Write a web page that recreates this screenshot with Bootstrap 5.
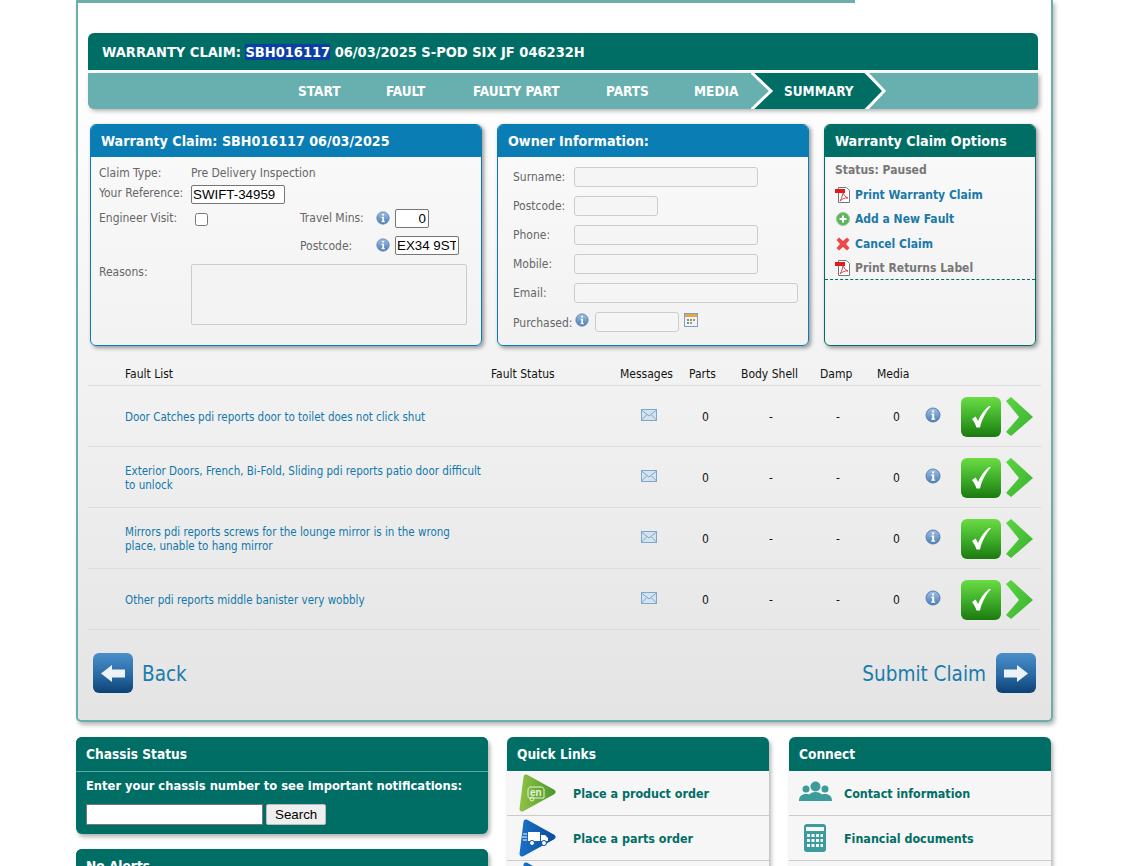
<!DOCTYPE html>
<html lang="en">
<head>
    <meta charset="UTF-8">
    <meta name="viewport" content="width=device-width, initial-scale=1.0">
    <title>Warranty Claim</title>
    <link href="https://cdn.jsdelivr.net/npm/bootstrap@5.3.0/dist/css/bootstrap.min.css" rel="stylesheet">
    <style>
        html, body { height: 866px; overflow: hidden; background: #fff; }
        body { font-family: "DejaVu Sans Condensed", "Noto Sans", sans-serif; font-size: 12px; color: #222; }
        a { text-decoration: none; }
        .page-wrap { width: 977px; margin-left: 76px; }

        .claim-panel {
            height: 722px;
            border: 2px solid #6aafad;
            border-top: 0;
            border-radius: 0 0 5px 5px;
            background: linear-gradient(#fff 0, #fff 60px, #e4e4e4 100%);
            box-shadow: 2px 3px 4px rgba(0,0,0,.28);
            padding: 0 10px;
        }
        .top-strip { height: 3px; width: 777px; margin-left: -10px; background: #6aafad; }
        .claim-title {
            margin: 30px 3px 3px 0; height: 37px; padding-left: 14px;
            background: #006e65; color: #fff; border-radius: 6px 6px 0 0;
            font-size: 14.5px; font-weight: 700; line-height: 38px;
        }
        .claim-title span { background: #0b3fa6; }
        .step-bar {
            position: relative; height: 36px; margin-right: 3px; padding-left: 210px;
            background: #68b0af; border-radius: 0 0 6px 6px; color: #fff;
            box-shadow: 2px 2px 4px rgba(0,0,0,.3);
            font-size: 13.5px; font-weight: 700; line-height: 36px;
        }
        .step-on { position: relative; width: 113px; }
        .step-on svg { position: absolute; left: -33px; top: 0; }
        .step-on b { position: relative; }

        .info-cards { margin: 15px 2px 0 2px; gap: 15px; height: 222px; }
        .panel-box {
            border: 1px solid #0a7db4; border-radius: 6px; overflow: hidden;
            background: linear-gradient(#fafafa, #f2f2f2);
            box-shadow: 2px 2px 4px rgba(0,0,0,.4);
            color: #666;
        }
        .panel-box-green { border-color: #006e65; }
        .box-head {
            height: 32px; padding-left: 10px; background: #0a7db4; color: #fff;
            font-size: 14.2px; font-weight: 700; line-height: 33px;
        }
        .panel-box-green .box-head { background: #006e65; }
        .box-claim { width: 392px; }
        .box-owner { width: 312px; }
        .box-options { width: 212px; }

        .claim-form { padding: 7px 8px 0 8px; }
        .claim-form label, .owner-form label { white-space: nowrap; }
        .lbl-a { width: 92px; }
        .lbl-b { width: 76px; }
        .old-input {
            height: 19px; padding: 0 2px 0 1px; border: 1px solid #767676; border-radius: 2px;
            font-family: "Liberation Sans", sans-serif; font-size: 13.33px; color: #000; background: #fff;
        }
        .dim-input { height: 20px; border: 1px solid #ccc; border-radius: 3px; background: #f5f5f5; }
        .old-check { width: 13px; height: 13px; margin: 4px 0 0 4px; }
        .info-mark { margin: 2px 4px 0 0; }
        .reasons-box { display: block; width: 276px; height: 61px; border: 1px solid #ccc; border-radius: 2px; background: #f3f3f3; resize: none; }

        .owner-form { padding: 10px 0 0 15px; }
        .owner-row { height: 29px; }
        .owner-form label { width: 61px; padding-top: 1px; }

        .option-list { padding-top: 1px; font-size: 12px; font-weight: 700; }
        .option-list > div { height: 24.5px; padding-left: 10px; }
        .option-list a { color: #1a79a8; }
        .option-muted { color: #777; }
        .option-end { border-bottom: 1px dashed #006e65; height: 24px !important; }

        .fault-table { width: 953px; margin: 15px 0 0 0; table-layout: fixed; --bs-table-bg: transparent; color: #111; font-size: 12px; }
        .fault-table th { height: 24px; padding: 2px 0 0 0; font-weight: 400; vertical-align: middle; border-bottom: 1px solid #ddd; }
        .fault-table td { height: 61px; padding: 2px 0 0 0; vertical-align: middle; border-bottom: 1px solid #ddd; line-height: 14px; }
        .fault-table td a { display: block; color: #1278ab; width: 357px; font-size: 11.5px; }
        .cell-icon { margin-bottom: 4px; }
        .pad-msg { padding-left: 21px !important; }
        .pad-parts { padding-left: 13px !important; }
        .pad-body { padding-left: 28px !important; }
        .pad-damp { padding-left: 16px !important; }
        .pad-media { padding-left: 16px !important; }
        .row-acts { gap: 5px; }

        .nav-links { margin-top: 23px; padding: 0 5px; font-size: 20.5px; }
        .nav-links a { color: #1a7cab; gap: 9px; }
        .nav-links span { padding-top: 4px; }
        .nav-next { gap: 10px !important; }

        .foot-cards { margin-top: 15px; }
        .foot-left { width: 412px; margin-right: 19px; }
        .foot-mid { width: 262px; margin-right: 20px; }
        .foot-right { width: 262px; }
        .green-box {
            color: #fff; border-radius: 6px; overflow: hidden;
            background: #006e65;
            box-shadow: 2px 3px 4px rgba(0,0,0,.3);
        }
        .green-head { height: 34px; padding-left: 10px; background: #006e65; font-size: 13.6px; font-weight: 700; line-height: 35px; }
        .head-line { height: 35px; border-bottom: 1px solid #5aa8a2; }
        .chassis-body { height: 62px; padding: 4px 10px 0 10px; font-size: 12.8px; font-weight: 700; }
        .chassis-form { margin-top: 9px; }
        .chassis-input { width: 177px; height: 21px; border: 1px solid #767676; background: #fff; }
        .chassis-btn {
            height: 21px; padding: 0 8px; margin-left: 3px; border: 1px solid #bbb; border-radius: 2px;
            background: #efefef; color: #000; font-family: "Liberation Sans", sans-serif; font-size: 13.33px; line-height: 18px;
        }
        .alert-box { margin-top: 15px; }
        .link-box { background: #f6f6f6; height: 200px; }
        .link-row { height: 45px; border-bottom: 1px solid #ccc; color: #006e65; font-size: 12.4px; font-weight: 700; }
        .link-row svg { flex: none; }
        .link-row span { padding-top: 2px; }
        .quick-row { padding-left: 11px; gap: 17px; }
        .conn-row { padding-left: 10px; gap: 12px; }
    </style>
</head>
<body>
    <svg width="0" height="0" class="position-absolute">
        <defs>
            <linearGradient id="gInfo" x1="0" y1="0" x2="0" y2="1"><stop offset="0" stop-color="#a3c0e4"/><stop offset="1" stop-color="#4a7cb6"/></linearGradient>
            <linearGradient id="gOk" x1="0" y1="0" x2="0" y2="1"><stop offset="0" stop-color="#6bdc44"/><stop offset=".5" stop-color="#3fb02a"/><stop offset="1" stop-color="#1b7a0f"/></linearGradient>
            <linearGradient id="gGo" x1="0" y1="0" x2="1" y2="1"><stop offset="0" stop-color="#5cd545"/><stop offset="1" stop-color="#38b02c"/></linearGradient>
            <linearGradient id="gNav" x1="0" y1="0" x2="0" y2="1"><stop offset="0" stop-color="#4a8fc9"/><stop offset=".55" stop-color="#2a6aa6"/><stop offset="1" stop-color="#0c4274"/></linearGradient>
            <linearGradient id="gEn" x1="0" y1="0" x2="1" y2="0"><stop offset="0" stop-color="#8cc044"/><stop offset="1" stop-color="#4f9a2c"/></linearGradient>
            <linearGradient id="gTruck" x1="0" y1="0" x2="1" y2="0"><stop offset="0" stop-color="#1a6fc4"/><stop offset="1" stop-color="#0a4f9c"/></linearGradient>
            <symbol id="iInfo" viewBox="0 0 16 16">
                <circle cx="8" cy="8" r="7" fill="url(#gInfo)" stroke="#5580b0"/>
                <rect x="7" y="3.200" width="2.200" height="2.200" rx="1" fill="#fff"/>
                <path d="M6.200 6.600h3v5h1v1.200H6.200v-1.200h1V7.800h-1z" fill="#fff"/>
            </symbol>
            <symbol id="iMail" viewBox="0 0 16 12">
                <rect x=".5" y=".5" width="15" height="11" fill="#d3e3f0" stroke="#7fa6c8"/>
                <path d="M.5 1 8 7l7.500-6M.5 11 6 5.500M15.500 11 10 5.500" fill="none" stroke="#7fa6c8"/>
            </symbol>
            <symbol id="iOk" viewBox="0 0 40 40">
                <rect width="40" height="40" rx="6" fill="url(#gOk)"/>
                <path d="M11 22l3.500-2.500c1 1.500 2 3 2.500 4.500 2.500-6 6-11 11-15h2c-5 5.500-9 13-11 21.500h-3.500c-1-3-2.500-6-4.500-8.500z" fill="#fff"/>
            </symbol>
            <symbol id="iGo" viewBox="0 0 28 40">
                <path d="M0 4 5 0 27 20 5 39 0 35 13 20z" fill="url(#gGo)"/>
            </symbol>
            <symbol id="iPdf" viewBox="0 0 16 16">
                <path d="M3.500 .5h8l3 3v12h-11z" fill="#fff" stroke="#777"/>
                <rect x="0" y="2" width="10" height="4" fill="#e01b1b"/>
                <path d="M5 14c2-3 3-7 3-10 0 3 2 6 5 7-3-.5-6 1-8 3z" fill="none" stroke="#c33" stroke-width=".9"/>
            </symbol>
            <symbol id="iPlus" viewBox="0 0 16 16">
                <circle cx="8" cy="8" r="6.500" fill="#5cb55c" stroke="#9ac79a"/>
                <path d="M7 4.500h2V7h2.500v2H9v2.500H7V9H4.500V7H7z" fill="#fff"/>
            </symbol>
            <symbol id="iCross" viewBox="0 0 16 16">
                <path d="M1.500 4 4 1.500 8 5l4-3.500L14.500 4 11 8l3.500 4-2.500 2.500-4-3.500-4 3.500L1.500 12 5 8z" fill="#ee4848"/>
            </symbol>
            <symbol id="iCal" viewBox="0 0 14 14">
                <rect x=".5" y=".5" width="13" height="13" fill="#eef3f8" stroke="#7f9fc0"/>
                <rect x="1" y="1" width="12" height="3" fill="#e8a24a"/>
                <path d="M3 6h2v2H3zM6 6h2v2H6z" fill="#6aa84f"/><path d="M9 6h2v2H9zM6 9h2v2H6z" fill="#d98b3a"/><path d="M3 9h2v2H3z" fill="#5a8fc9"/>
            </symbol>
            <symbol id="iBack" viewBox="0 0 40 40">
                <rect width="40" height="40" rx="6" fill="url(#gNav)"/>
                <path d="M8 20.500 19 12v4.500h13v8H19V29z" fill="#eef2f6"/>
            </symbol>
            <symbol id="iNext" viewBox="0 0 40 40">
                <rect width="40" height="40" rx="6" fill="url(#gNav)"/>
                <path d="M32 20.500 21 12v4.500H8v8h13V29z" fill="#eef2f6"/>
            </symbol>
        </defs>
    </svg>

    <div class="page-wrap">
        <div class="claim-panel">
            <div class="top-strip"></div>
            <div class="claim-title">WARRANTY CLAIM: <span>SBH016117</span> 06/03/2025 S-POD SIX JF 046232H</div>
            <div class="step-bar d-flex">
                <div style="width:88px">START</div>
                <div style="width:87px">FAULT</div>
                <div style="width:133px">FAULTY PART</div>
                <div style="width:88px">PARTS</div>
                <div style="width:90px">MEDIA</div>
                <div class="step-on">
                    <svg width="140" height="36" viewBox="0 0 140 36">
                        <path d="M2 0H113L132 18 113 36H2L21 18z" fill="#006e65"/>
                        <path d="M0-1 20 18 0 37M115-1 133 18 115 37" fill="none" stroke="#fff" stroke-width="3"/>
                    </svg>
                    <b>SUMMARY</b>
                </div>
            </div>

            <div class="info-cards d-flex">
                <div class="panel-box box-claim">
                    <div class="box-head">Warranty Claim: SBH016117 06/03/2025</div>
                    <div class="claim-form">
                        <div class="d-flex" style="height:21px"><label class="lbl-a">Claim Type:</label><span>Pre Delivery Inspection</span></div>
                        <div class="d-flex" style="height:24px"><label class="lbl-a" style="margin-top:-1px">Your Reference:</label><input class="old-input" style="width:94px" value="SWIFT-34959"></div>
                        <div class="d-flex" style="height:27px">
                            <label class="lbl-a">Engineer Visit:</label>
                            <div style="width:109px"><input type="checkbox" class="old-check"></div>
                            <label class="lbl-b">Travel Mins:</label>
                            <svg width="14" height="14" class="info-mark"><use href="#iInfo"/></svg>
                            <input class="old-input text-end" style="width:34px;margin-left:1px" value="0">
                        </div>
                        <div class="d-flex" style="height:28px">
                            <div style="width:201px"></div>
                            <label class="lbl-b" style="padding-top:1px">Postcode:</label>
                            <svg width="14" height="14" class="info-mark"><use href="#iInfo"/></svg>
                            <input class="old-input" style="width:64px;margin-left:1px" value="EX34 9ST">
                        </div>
                        <div class="d-flex"><label class="lbl-a" style="margin-top:-1px">Reasons:</label><textarea class="reasons-box"></textarea></div>
                    </div>
                </div>

                <div class="panel-box box-owner">
                    <div class="box-head">Owner Information:</div>
                    <div class="owner-form">
                        <div class="owner-row d-flex"><label>Surname:</label><input class="dim-input" style="width:184px"></div>
                        <div class="owner-row d-flex"><label>Postcode:</label><input class="dim-input" style="width:84px"></div>
                        <div class="owner-row d-flex"><label>Phone:</label><input class="dim-input" style="width:184px"></div>
                        <div class="owner-row d-flex"><label>Mobile:</label><input class="dim-input" style="width:184px"></div>
                        <div class="owner-row d-flex"><label>Email:</label><input class="dim-input" style="width:224px"></div>
                        <div class="owner-row d-flex">
                            <label style="width:62px;padding-top:2px">Purchased:</label>
                            <svg width="14" height="14" style="margin-top:1px"><use href="#iInfo"/></svg>
                            <input class="dim-input" style="width:84px;margin-left:6px">
                            <svg width="14" height="14" style="margin-left:5px;margin-top:1px"><use href="#iCal"/></svg>
                        </div>
                    </div>
                </div>

                <div class="panel-box panel-box-green box-options">
                    <div class="box-head">Warranty Claim Options</div>
                    <div class="option-list">
                        <div class="d-flex align-items-center option-muted">Status: Paused</div>
                        <div class="d-flex align-items-center gap-1"><svg width="16" height="16"><use href="#iPdf"/></svg><a href="#">Print Warranty Claim</a></div>
                        <div class="d-flex align-items-center gap-1"><svg width="16" height="16"><use href="#iPlus"/></svg><a href="#">Add a New Fault</a></div>
                        <div class="d-flex align-items-center gap-1"><svg width="16" height="16"><use href="#iCross"/></svg><a href="#">Cancel Claim</a></div>
                        <div class="d-flex align-items-center gap-1 option-end option-muted"><svg width="16" height="16"><use href="#iPdf"/></svg>Print Returns Label</div>
                    </div>
                </div>
            </div>

            <table class="table fault-table mb-0">
                <colgroup>
                    <col style="width:37px"><col style="width:366px"><col style="width:129px"><col style="width:69px"><col style="width:52px"><col style="width:79px"><col style="width:57px"><col style="width:48px"><col style="width:36px"><col style="width:80px">
                </colgroup>
                <thead>
                    <tr><th></th><th>Fault List</th><th>Fault Status</th><th>Messages</th><th>Parts</th><th>Body Shell</th><th>Damp</th><th>Media</th><th></th><th></th></tr>
                </thead>
                <tbody id="faultRows"></tbody>
            </table>

            <div class="nav-links d-flex justify-content-between">
                <a href="#" class="d-flex align-items-center"><svg width="40" height="40"><use href="#iBack"/></svg><span>Back</span></a>
                <a href="#" class="d-flex align-items-center nav-next"><span>Submit Claim</span><svg width="40" height="40"><use href="#iNext"/></svg></a>
            </div>
        </div>

        <div class="foot-cards d-flex">
            <div class="foot-left">
                <div class="green-box">
                    <div class="green-head head-line">Chassis Status</div>
                    <div class="chassis-body">
                        <div>Enter your chassis number to see important notifications:</div>
                        <div class="d-flex chassis-form"><input class="chassis-input"><button class="chassis-btn">Search</button></div>
                    </div>
                </div>
                <div class="green-box alert-box">
                    <div class="green-head">No Alerts</div>
                </div>
            </div>
            <div class="foot-mid">
                <div class="green-box link-box">
                    <div class="green-head">Quick Links</div>
                    <div class="link-row quick-row d-flex align-items-center">
                        <svg width="38" height="38" viewBox="0 0 38 38">
                            <path d="M8 3 35 18 4 35z" fill="url(#gEn)" stroke="url(#gEn)" stroke-width="5" stroke-linejoin="round"/>
                            <path d="M12 24c-2 0-2-1-2-3v-5c0-2 1-3 3-3h10c2 0 3 1 3 3v8z" fill="none" stroke="#e9f3dc"/>
                            <circle cx="14" cy="25" r="2" fill="none" stroke="#e9f3dc"/>
                            <text x="12" y="22" fill="#e9f3dc" font-size="10" font-weight="700" font-family="Liberation Sans, sans-serif">en</text>
                        </svg>
                        <span>Place a product order</span>
                    </div>
                    <div class="link-row quick-row d-flex align-items-center">
                        <svg width="38" height="38" viewBox="0 0 38 38">
                            <path d="M8 3 35 18 4 35z" fill="url(#gTruck)" stroke="url(#gTruck)" stroke-width="5" stroke-linejoin="round"/>
                            <path d="M10 13h12v9H10zM23 16h4l3 3v3h-7z" fill="#fff"/>
                            <circle cx="14" cy="24" r="2.500" fill="#fff" stroke="#0a4f9c"/><circle cx="26" cy="24" r="2.500" fill="#fff" stroke="#0a4f9c"/>
                            <path d="M5 15h4M4 18h5M5 21h4" stroke="#fff"/>
                        </svg>
                        <span>Place a parts order</span>
                    </div>
                    <div class="link-row quick-row d-flex" style="border:0;padding-top:1px">
                        <svg width="38" height="38" viewBox="0 0 38 38"><path d="M8 3 35 18 4 35z" fill="url(#gTruck)" stroke="url(#gTruck)" stroke-width="5" stroke-linejoin="round"/></svg>
                    </div>
                </div>
            </div>
            <div class="foot-right">
                <div class="green-box link-box">
                    <div class="green-head">Connect</div>
                    <div class="link-row conn-row d-flex align-items-center">
                        <svg width="33" height="24" viewBox="0 0 33 24" fill="#3c9b9b">
                            <circle cx="7" cy="8" r="3.500"/><circle cx="26" cy="8" r="3.500"/><path d="M0 20c0-5 3-7 7-7s5 1 5 3l-2 4zM33 20c0-5-3-7-7-7s-5 1-5 3l2 4z"/>
                            <circle cx="16.500" cy="5.500" r="5"/><path d="M8 20c0-6 4-9 8.500-9S25 14 25 20z"/>
                        </svg>
                        <span>Contact information</span>
                    </div>
                    <div class="link-row conn-row d-flex align-items-center" style="padding-left:15px;gap:18px">
                        <svg width="22" height="28" viewBox="0 0 22 28">
                            <rect width="22" height="28" rx="3" fill="#3c9b9b"/>
                            <rect x="2" y="3" width="18" height="4" fill="#f6f6f6"/>
                            <path d="M3 10h3v3H3zM7.500 10h3v3h-3zM12 10h3v3h-3zM16.500 10H19v3h-2.500zM3 15h3v3H3zM7.500 15h3v3h-3zM12 15h3v3h-3zM16.500 15H19v3h-2.500zM3 20h3v3H3zM7.500 20h3v3h-3zM12 20h3v3h-3zM16.500 20H19v3h-2.500z" fill="#f6f6f6"/>
                        </svg>
                        <span>Financial documents</span>
                    </div>
                </div>
            </div>
        </div>
    </div>

    <script src="https://cdn.jsdelivr.net/npm/bootstrap@5.3.0/dist/js/bootstrap.bundle.min.js"></script>
    <script>
        // fault rows
        const faults = [
            'Door Catches pdi reports door to toilet does not click shut',
            'Exterior Doors, French, Bi-Fold, Sliding pdi reports patio door difficult to unlock',
            'Mirrors pdi reports screws for the lounge mirror is in the wrong place, unable to hang mirror',
            'Other pdi reports middle banister very wobbly'
        ];
        document.getElementById('faultRows').innerHTML = faults.map(f => `
            <tr>
                <td></td>
                <td><a href="#">${f}</a></td>
                <td></td>
                <td class="pad-msg"><svg width="16" height="12" class="cell-icon"><use href="#iMail"/></svg></td>
                <td class="pad-parts">0</td>
                <td class="pad-body">-</td>
                <td class="pad-damp">-</td>
                <td class="pad-media">0</td>
                <td><svg width="16" height="16" class="cell-icon"><use href="#iInfo"/></svg></td>
                <td><div class="row-acts d-flex align-items-center"><svg width="40" height="40"><use href="#iOk"/></svg><svg width="28" height="40"><use href="#iGo"/></svg></div></td>
            </tr>`).join('');
    </script>
</body>
</html>
